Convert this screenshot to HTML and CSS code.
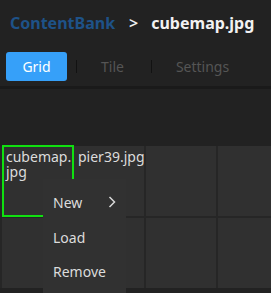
FILE: index.html
```html
<!DOCTYPE html>
<html>
<head>
<meta charset="utf-8">
<link rel="stylesheet" href="styles.css">
</head>
<body>
<div class="app">
  <header class="crumbs">
    <span class="crumb-root">ContentBank</span>
    <span class="crumb-sep">&gt;</span>
    <span class="crumb-cur">cubemap.jpg</span>
  </header>
  <nav class="tabs">
    <span class="tab active">Grid</span>
    <span class="tab-sep"></span>
    <span class="tab">Tile</span>
    <span class="tab-sep"></span>
    <span class="tab">Settings</span>
  </nav>
  <div class="rule"></div>
  <div class="spacer"></div>
  <div class="grid">
    <div class="cell selected"><span class="label">cubemap.<wbr>jpg</span><span class="sel-box"></span></div>
    <div class="cell"><span class="label">pier39.jpg</span></div>
    <div class="cell"></div>
    <div class="cell"></div>
    <div class="cell"></div>
    <div class="cell"></div>
    <div class="cell"></div>
    <div class="cell"></div>
  </div>
  <ul class="menu">
    <li class="item">New<svg class="chev" width="8" height="12" viewBox="0 0 8 12"><polyline points="1.5,1 6.5,6 1.5,11" fill="none" stroke="#d8d8d8" stroke-width="1.5"/></svg></li>
    <li class="item">Load</li>
    <li class="item">Remove</li>
  </ul>
</div>
</body>
</html>
```
FILE: styles.css
```css
html, body {
  margin: 0;
  padding: 0;
  background: #222222;
  overflow: hidden;
}
.app {
  position: relative;
  width: 271px;
  height: 293px;
  overflow: hidden;
  font-family: "Noto Sans", "DejaVu Sans", sans-serif;
}
.crumbs {
  display: flex;
  align-items: baseline;
  height: 46px;
  padding: 12px 0 0 10px;
  box-sizing: border-box;
  font-size: 16px;
  font-weight: 700;
  line-height: 22px;
}
.crumb-root { color: #1e5288; }
.crumb-sep { color: #eeeeee; margin: 0 13px 0 14px; font-weight: 600; }
.crumb-cur { color: #f2f2f2; }
.tabs {
  display: flex;
  align-items: center;
  height: 29px;
  padding: 6px 0 0 6px;
}
.tab {
  font-size: 14px;
  color: #555555;
  line-height: 29px;
  padding-right: 18px;
}
.tab.active {
  width: 61px;
  height: 29px;
  padding: 0;
  text-align: center;
  background: #36a0f9;
  color: #ffffff;
  border-radius: 3px;
}
.tab-sep {
  width: 1px;
  height: 13px;
  background: #121212;
  margin: 0 24px 0 9px;
}
.rule {
  height: 3px;
  margin-top: 5px;
  background: #1a1a1a;
}
.spacer { height: 57px; }
.grid {
  display: grid;
  grid-template-columns: repeat(4, 70px);
  grid-auto-rows: 70px;
  gap: 2px;
  padding: 0 0 0 2px;
  background: #262626;
  width: 300px;
}
.cell {
  position: relative;
  background: #303030;
  padding: 3px 4px;
  box-sizing: border-box;
}
.label {
  display: block;
  font-size: 14px;
  line-height: 15px;
  color: #dcdcdc;
}
.sel-box {
  position: absolute;
  left: 0;
  top: -1px;
  width: 72px;
  height: 72px;
  border: 2px solid #10e010;
  box-sizing: border-box;
}
.menu {
  position: absolute;
  left: 43px;
  top: 179px;
  width: 83px;
  margin: 0;
  padding: 6px 0 0;
  list-style: none;
  background: #313131;
  height: 120px;
  box-sizing: border-box;
}
.item {
  display: flex;
  align-items: center;
  height: 34.7px;
  padding-left: 10px;
  font-size: 14px;
  color: #dcdcdc;
}
.chev {
  margin-left: 26px;
}
```
